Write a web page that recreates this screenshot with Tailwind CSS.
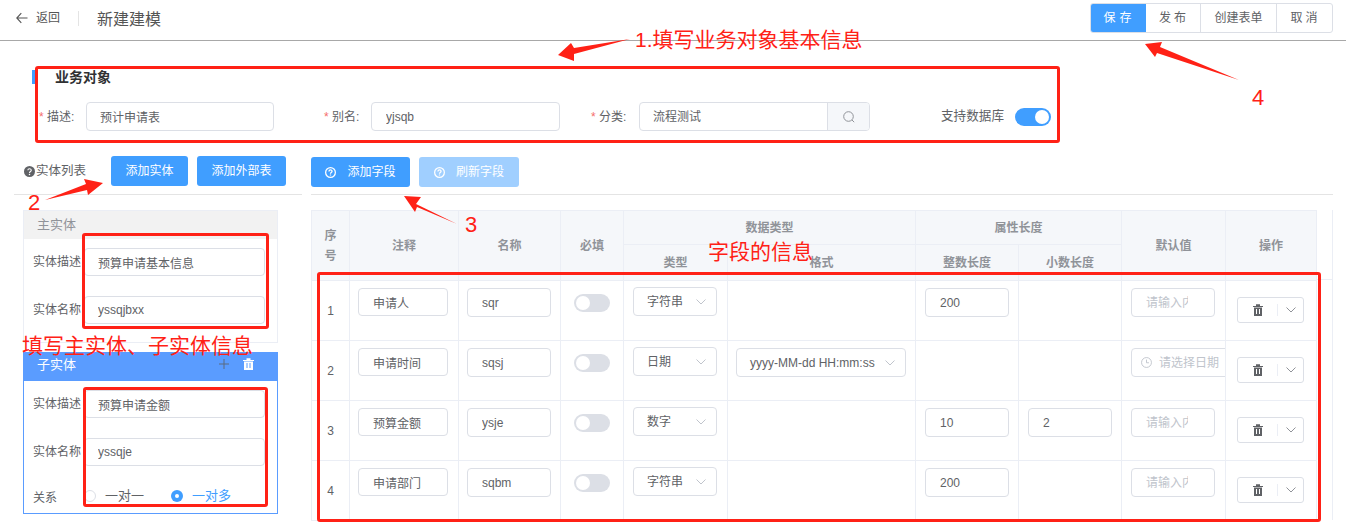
<!DOCTYPE html>
<html lang="en">
<head>
    <meta charset="UTF-8">
    <script src="https://cdn.jsdelivr.net/npm/@tailwindcss/browser@4"></script>
    <title>新建建模</title>
</head>
<body class="bg-white text-[#606266] text-xs font-[family-name:Liberation_Sans,Noto_Sans_CJK_SC,sans-serif]">
<div class="relative w-[1346px] h-[523px] overflow-hidden">

    <!-- Top bar -->
    <header class="h-[41px] border-b border-[#a8a8a8] flex items-start">
        <div class="flex items-center h-[36px] pl-[16px]">
            <svg class="w-[12px] h-[12px] mr-[8px]" viewBox="0 0 12 12" fill="none" stroke="#555" stroke-width="1.1"><path d="M11.5 6H.8M5.3 1.2.8 6l4.500 4.800"/></svg>
            <span class="text-[#555]">返回</span>
            <span class="w-px h-[15px] bg-[#e4e4e4] ml-[18px] mr-[18px]"></span>
            <span class="text-[16px] text-[#555] mt-[4px]">新建建模</span>
        </div>
        <div class="ml-auto mr-[13px] mt-[3px] flex h-[30px] rounded-[3px] border border-[#dcdfe6] overflow-hidden">
            <button class="w-[56px] -ml-px -my-px bg-[#409eff] text-white tracking-[4px] pl-[3px]">保存</button>
            <button class="w-[55px] border-r border-[#dcdfe6] tracking-[3px] pl-[2px]">发布</button>
            <button class="w-[76px] border-r border-[#dcdfe6]">创建表单</button>
            <button class="w-[55px] tracking-[3px] pl-[2px]">取消</button>
        </div>
    </header>

    <!-- Business object -->
    <section class="pl-[32px] pt-[29px]">
        <div class="h-[14px] border-l-[3px] border-[#409eff] pl-[20px] flex items-center font-bold text-[14px] text-[#303133] leading-none">业务对象</div>
        <div class="flex items-center h-[29px] mt-[18px] pl-[7px]">
            <label class="w-[37px] mr-[10px] whitespace-nowrap"><span class="text-[#f56c6c]">* </span>描述:</label>
            <input class="w-[188px] h-[29px] border border-[#dcdfe6] rounded-[4px] px-[13px] outline-none" value="预计申请表">
            <label class="w-[37px] ml-[50px] mr-[10px] whitespace-nowrap"><span class="text-[#f56c6c]">* </span>别名:</label>
            <input class="w-[189px] h-[29px] border border-[#dcdfe6] rounded-[4px] px-[14px] outline-none" value="yjsqb">
            <label class="w-[37px] ml-[31px] mr-[11px] whitespace-nowrap"><span class="text-[#f56c6c]">* </span>分类:</label>
            <div class="w-[231px] h-[29px] flex border border-[#dcdfe6] rounded-[4px] overflow-hidden">
                <input class="flex-1 min-w-0 px-[13px] outline-none" value="流程测试">
                <span class="w-[42px] bg-[#f5f7fa] border-l border-[#dcdfe6] flex items-center justify-center">
                    <svg class="w-[12px] h-[12px]" viewBox="0 0 12 12" fill="none" stroke="#909399" stroke-width="1"><circle cx="5.5" cy="5.5" r="4.8"/><path d="m9 9 2.2 2.2"/></svg>
                </span>
            </div>
            <span class="ml-[71px] w-[63px] whitespace-nowrap text-[12.6px]">支持数据库</span>
            <span class="ml-[11px] w-[36px] h-[18px] rounded-full bg-[#409eff] flex items-center justify-end pr-[2px]"><span class="w-[14px] h-[14px] rounded-full bg-white"></span></span>
        </div>
    </section>

    <div class="flex mt-[25px] pl-[14px]">
        <!-- Entities column -->
        <div class="w-[288px] shrink-0">
            <div class="h-[39px] border-b border-[#e4e4e4] flex items-start pl-[10px]">
                <div class="h-[30px] flex items-center whitespace-nowrap w-[87px] text-[12.5px]">
                    <svg class="w-[11px] h-[11px] mr-px shrink-0" viewBox="0 0 12 12"><circle cx="6" cy="6" r="6" fill="#606266"/><path d="M4.2 4.7c0-2.3 3.7-2.3 3.7-.1 0 1.4-1.9 1.400-1.900 2.900" fill="none" stroke="#fff" stroke-width="1.2"/><circle cx="6" cy="9.3" r=".8" fill="#fff"/></svg>
                    <span>实体列表</span>
                </div>
                <button class="w-[77px] h-[30px] rounded-[3px] bg-[#409eff] text-white">添加实体</button>
                <button class="w-[89px] h-[30px] rounded-[3px] bg-[#409eff] text-white ml-[9px]">添加外部表</button>
            </div>

            <!-- Main entity -->
            <div class="ml-[9px] w-[255px] h-[133px] mt-[15px] border border-[#ebeef5]">
                <div class="h-[28px] bg-[#f2f2f2] flex items-center pl-[13px] text-[13px] text-[#909399]">主实体</div>
                <div class="flex items-center mt-[9px] pl-[9px]">
                    <span class="w-[51px] whitespace-nowrap">实体描述</span>
                    <input class="w-[181px] h-[28px] border border-[#dcdfe6] rounded-[4px] px-[13px] outline-none" value="预算申请基本信息">
                </div>
                <div class="flex items-center mt-[20px] pl-[9px]">
                    <span class="w-[51px] whitespace-nowrap">实体名称</span>
                    <input class="w-[181px] h-[28px] border border-[#dcdfe6] rounded-[4px] px-[13px] outline-none" value="yssqjbxx">
                </div>
            </div>

            <!-- Child entity -->
            <div class="ml-[9px] w-[255px] h-[162px] mt-[9px] border border-[#5a9cff]">
                <div class="h-[28px] bg-[#5a9cff] flex items-start pt-[3px] pl-[13px] text-[13px] text-white">
                    <span>子实体</span>
                    <svg class="ml-auto mt-[3px] w-[10px] h-[10px]" viewBox="0 0 10 10" stroke="#5b6b80" stroke-width="1"><path d="M5 0v10M0 5h10"/></svg>
                    <svg class="ml-[14px] mt-[2px] mr-[23px] w-[11px] h-[12px]" viewBox="0 0 11 12" fill="#fff"><path d="M0 2h11v1H0zM3.5.3h4V2h-4zM1 3.6h9V12H1z"/><path d="M4 5v5M7 5v5" stroke="#5a9cff"/></svg>
                </div>
                <div class="flex items-center mt-[9px] pl-[9px]">
                    <span class="w-[51px] whitespace-nowrap">实体描述</span>
                    <input class="w-[181px] h-[28px] border border-[#dcdfe6] rounded-[4px] px-[13px] outline-none" value="预算申请金额">
                </div>
                <div class="flex items-center mt-[20px] pl-[9px]">
                    <span class="w-[51px] whitespace-nowrap">实体名称</span>
                    <input class="w-[181px] h-[28px] border border-[#dcdfe6] rounded-[4px] px-[13px] outline-none" value="yssqje">
                </div>
                <div class="flex items-center mt-[20px] pl-[9px]">
                    <span class="w-[51px] mt-[4px]">关系</span>
                    <span class="w-[12px] h-[12px] rounded-full border border-[#dcdfe6]"></span>
                    <span class="ml-[9px] text-[13px]">一对一</span>
                    <span class="ml-[27px] w-[12px] h-[12px] rounded-full bg-[#409eff] flex items-center justify-center"><span class="w-[4px] h-[4px] rounded-full bg-white"></span></span>
                    <span class="ml-[9px] text-[13px] text-[#409eff]">一对多</span>
                </div>
            </div>
        </div>

        <!-- Fields column -->
        <div class="ml-[9px] w-[1022px] shrink-0">
            <div class="h-[39px] border-b border-[#e4e4e4] flex items-start pt-px">
                <button class="w-[99px] h-[30px] rounded-[3px] bg-[#409eff] text-white flex items-center justify-center">
                    <svg class="w-[11px] h-[11px] mr-[11px]" viewBox="0 0 12 12" fill="none" stroke="#fff" stroke-width="1.4"><circle cx="6" cy="6" r="5.300"/><path d="M4.300 4.800c0-2.200 3.400-2.200 3.400-.1 0 1.300-1.700 1.300-1.700 2.600M6 8.200v1.100"/></svg>
                    添加字段
                </button>
                <button class="w-[100px] h-[30px] rounded-[3px] bg-[#a0cfff] text-white ml-[9px] flex items-center justify-center">
                    <svg class="w-[11px] h-[11px] mr-[11px]" viewBox="0 0 12 12" fill="none" stroke="#fff" stroke-width="1.4"><circle cx="6" cy="6" r="5.300"/><path d="M4.300 4.800c0-2.200 3.400-2.200 3.400-.1 0 1.300-1.700 1.300-1.700 2.600M6 8.200v1.100"/></svg>
                    刷新字段
                </button>
            </div>

            <div class="mt-[15px] relative">
                <table class="table-fixed border-collapse w-[1005px]">
                    <colgroup>
                        <col class="w-[38px]"><col class="w-[109px]"><col class="w-[102px]"><col class="w-[63px]"><col class="w-[104px]"><col class="w-[188px]"><col class="w-[103px]"><col class="w-[103px]"><col class="w-[104px]"><col class="w-[91px]">
                    </colgroup>
                    <thead class="bg-[#f5f7fa] text-[#909399] font-bold">
                        <tr class="h-[34px]">
                            <th rowspan="2" class="border border-[#ebeef5] leading-[20px]">序<br>号</th>
                            <th rowspan="2" class="border border-[#ebeef5]">注释</th>
                            <th rowspan="2" class="border border-[#ebeef5]">名称</th>
                            <th rowspan="2" class="border border-[#ebeef5]">必填</th>
                            <th colspan="2" class="border border-[#ebeef5]">数据类型</th>
                            <th colspan="2" class="border border-[#ebeef5]">属性长度</th>
                            <th rowspan="2" class="border border-[#ebeef5]">默认值</th>
                            <th rowspan="2" class="border border-[#ebeef5]">操作</th>
                        </tr>
                        <tr class="h-[36px]">
                            <th class="border border-[#ebeef5]">类型</th>
                            <th class="border border-[#ebeef5]">格式</th>
                            <th class="border border-[#ebeef5]">整数长度</th>
                            <th class="border border-[#ebeef5]">小数长度</th>
                        </tr>
                    </thead>
                    <tbody>
                        <tr class="h-[60px]">
                            <td class="border border-[#ebeef5] text-center">1</td>
                            <td class="border border-[#ebeef5] align-top pt-[7px] pl-[8px]"><input class="w-[90px] h-[28px] border border-[#dcdfe6] rounded-[4px] px-[14px] outline-none" value="申请人"></td>
                            <td class="border border-[#ebeef5] align-top pt-[7px] pl-[8px]"><input class="w-[84px] h-[29px] border border-[#dcdfe6] rounded-[4px] px-[14px] outline-none" value="sqr"></td>
                            <td class="border border-[#ebeef5] align-top pt-[13px] pl-[13px]"><span class="w-[36px] h-[18px] rounded-full bg-[#dcdfe6] flex items-center pl-[2px]"><span class="w-[14px] h-[14px] rounded-full bg-white"></span></span></td>
                            <td class="border border-[#ebeef5] align-top pt-[6px] pl-[9px]"><div class="w-[84px] h-[29px] border border-[#dcdfe6] rounded-[4px] pl-[13px] pr-[10px] flex items-center justify-between"><span>字符串</span><svg class="w-[10px] h-[6px]" viewBox="0 0 10 6" fill="none" stroke="#c0c4cc"><path d="m.5.5 4.500 4.500L9.500.5"/></svg></div></td>
                            <td class="border border-[#ebeef5]"></td>
                            <td class="border border-[#ebeef5] align-top pt-[7px] pl-[9px]"><input class="w-[84px] h-[29px] border border-[#dcdfe6] rounded-[4px] px-[14px] outline-none" value="200"></td>
                            <td class="border border-[#ebeef5]"></td>
                            <td class="border border-[#ebeef5] align-top pt-[7px] pl-[9px]"><input class="w-[84px] h-[29px] border border-[#dcdfe6] rounded-[4px] pl-[14px] pr-[26px] outline-none placeholder:text-[#c0c4cc]" placeholder="请输入内容"></td>
                            <td class="border border-[#ebeef5] align-top pt-[16px] pl-[11px]"><div class="w-[67px] h-[26px] border border-[#dcdfe6] rounded-[3px] flex items-center"><span class="w-[40px] flex justify-center border-r border-[#ebeef5]"><svg class="w-[10px] h-[12px]" viewBox="0 0 10 12" fill="#606266"><path d="M0 2h10v1H0zM3 .2h4V2H3zM1 3.600h8V12H1z"/><path d="M3.500 5v5M6.500 5v5" stroke="#fff"/></svg></span><svg class="ml-[8px] w-[10px] h-[6px]" viewBox="0 0 10 6" fill="none" stroke="#909399"><path d="m.5.5 4.500 4.500L9.500.5"/></svg></div></td>
                        </tr>
                        <tr class="h-[60px]">
                            <td class="border border-[#ebeef5] text-center">2</td>
                            <td class="border border-[#ebeef5] align-top pt-[7px] pl-[8px]"><input class="w-[90px] h-[28px] border border-[#dcdfe6] rounded-[4px] px-[14px] outline-none" value="申请时间"></td>
                            <td class="border border-[#ebeef5] align-top pt-[7px] pl-[8px]"><input class="w-[84px] h-[29px] border border-[#dcdfe6] rounded-[4px] px-[14px] outline-none" value="sqsj"></td>
                            <td class="border border-[#ebeef5] align-top pt-[13px] pl-[13px]"><span class="w-[36px] h-[18px] rounded-full bg-[#dcdfe6] flex items-center pl-[2px]"><span class="w-[14px] h-[14px] rounded-full bg-white"></span></span></td>
                            <td class="border border-[#ebeef5] align-top pt-[6px] pl-[9px]"><div class="w-[84px] h-[29px] border border-[#dcdfe6] rounded-[4px] pl-[13px] pr-[10px] flex items-center justify-between"><span>日期</span><svg class="w-[10px] h-[6px]" viewBox="0 0 10 6" fill="none" stroke="#c0c4cc"><path d="m.5.5 4.500 4.500L9.500.5"/></svg></div></td>
                            <td class="border border-[#ebeef5] align-top pt-[7px] pl-[8px]"><div class="w-[170px] h-[29px] border border-[#dcdfe6] rounded-[4px] pl-[13px] pr-[10px] flex items-center justify-between whitespace-nowrap"><span>yyyy-MM-dd HH:mm:ss</span><svg class="w-[10px] h-[6px]" viewBox="0 0 10 6" fill="none" stroke="#c0c4cc"><path d="m.5.5 4.500 4.500L9.500.5"/></svg></div></td>
                            <td class="border border-[#ebeef5]"></td>
                            <td class="border border-[#ebeef5]"></td>
                            <td class="border border-[#ebeef5] align-top pt-[7px] pl-[9px] overflow-hidden"><div class="w-[110px] h-[29px] border border-[#dcdfe6] rounded-[4px] pl-[9px] flex items-center text-[#c0c4cc] whitespace-nowrap"><svg class="w-[11px] h-[11px] mr-[7px] shrink-0" viewBox="0 0 12 12" fill="none" stroke="#c0c4cc"><circle cx="6" cy="6" r="5.400"/><path d="M6 2.800V6.300h2.700"/></svg>请选择日期</div></td>
                            <td class="border border-[#ebeef5] align-top pt-[16px] pl-[11px]"><div class="w-[67px] h-[26px] border border-[#dcdfe6] rounded-[3px] flex items-center"><span class="w-[40px] flex justify-center border-r border-[#ebeef5]"><svg class="w-[10px] h-[12px]" viewBox="0 0 10 12" fill="#606266"><path d="M0 2h10v1H0zM3 .2h4V2H3zM1 3.600h8V12H1z"/><path d="M3.500 5v5M6.500 5v5" stroke="#fff"/></svg></span><svg class="ml-[8px] w-[10px] h-[6px]" viewBox="0 0 10 6" fill="none" stroke="#909399"><path d="m.5.5 4.500 4.500L9.500.5"/></svg></div></td>
                        </tr>
                        <tr class="h-[60px]">
                            <td class="border border-[#ebeef5] text-center">3</td>
                            <td class="border border-[#ebeef5] align-top pt-[7px] pl-[8px]"><input class="w-[90px] h-[28px] border border-[#dcdfe6] rounded-[4px] px-[14px] outline-none" value="预算金额"></td>
                            <td class="border border-[#ebeef5] align-top pt-[7px] pl-[8px]"><input class="w-[84px] h-[29px] border border-[#dcdfe6] rounded-[4px] px-[14px] outline-none" value="ysje"></td>
                            <td class="border border-[#ebeef5] align-top pt-[13px] pl-[13px]"><span class="w-[36px] h-[18px] rounded-full bg-[#dcdfe6] flex items-center pl-[2px]"><span class="w-[14px] h-[14px] rounded-full bg-white"></span></span></td>
                            <td class="border border-[#ebeef5] align-top pt-[6px] pl-[9px]"><div class="w-[84px] h-[29px] border border-[#dcdfe6] rounded-[4px] pl-[13px] pr-[10px] flex items-center justify-between"><span>数字</span><svg class="w-[10px] h-[6px]" viewBox="0 0 10 6" fill="none" stroke="#c0c4cc"><path d="m.5.5 4.500 4.500L9.500.5"/></svg></div></td>
                            <td class="border border-[#ebeef5]"></td>
                            <td class="border border-[#ebeef5] align-top pt-[7px] pl-[9px]"><input class="w-[84px] h-[29px] border border-[#dcdfe6] rounded-[4px] px-[14px] outline-none" value="10"></td>
                            <td class="border border-[#ebeef5] align-top pt-[7px] pl-[9px]"><input class="w-[84px] h-[29px] border border-[#dcdfe6] rounded-[4px] px-[14px] outline-none" value="2"></td>
                            <td class="border border-[#ebeef5] align-top pt-[7px] pl-[9px]"><input class="w-[84px] h-[29px] border border-[#dcdfe6] rounded-[4px] pl-[14px] pr-[26px] outline-none placeholder:text-[#c0c4cc]" placeholder="请输入内容"></td>
                            <td class="border border-[#ebeef5] align-top pt-[16px] pl-[11px]"><div class="w-[67px] h-[26px] border border-[#dcdfe6] rounded-[3px] flex items-center"><span class="w-[40px] flex justify-center border-r border-[#ebeef5]"><svg class="w-[10px] h-[12px]" viewBox="0 0 10 12" fill="#606266"><path d="M0 2h10v1H0zM3 .2h4V2H3zM1 3.600h8V12H1z"/><path d="M3.500 5v5M6.500 5v5" stroke="#fff"/></svg></span><svg class="ml-[8px] w-[10px] h-[6px]" viewBox="0 0 10 6" fill="none" stroke="#909399"><path d="m.5.5 4.500 4.500L9.500.5"/></svg></div></td>
                        </tr>
                        <tr class="h-[60px]">
                            <td class="border border-[#ebeef5] text-center">4</td>
                            <td class="border border-[#ebeef5] align-top pt-[7px] pl-[8px]"><input class="w-[90px] h-[28px] border border-[#dcdfe6] rounded-[4px] px-[14px] outline-none" value="申请部门"></td>
                            <td class="border border-[#ebeef5] align-top pt-[7px] pl-[8px]"><input class="w-[84px] h-[29px] border border-[#dcdfe6] rounded-[4px] px-[14px] outline-none" value="sqbm"></td>
                            <td class="border border-[#ebeef5] align-top pt-[13px] pl-[13px]"><span class="w-[36px] h-[18px] rounded-full bg-[#dcdfe6] flex items-center pl-[2px]"><span class="w-[14px] h-[14px] rounded-full bg-white"></span></span></td>
                            <td class="border border-[#ebeef5] align-top pt-[6px] pl-[9px]"><div class="w-[84px] h-[29px] border border-[#dcdfe6] rounded-[4px] pl-[13px] pr-[10px] flex items-center justify-between"><span>字符串</span><svg class="w-[10px] h-[6px]" viewBox="0 0 10 6" fill="none" stroke="#c0c4cc"><path d="m.5.5 4.500 4.500L9.500.5"/></svg></div></td>
                            <td class="border border-[#ebeef5]"></td>
                            <td class="border border-[#ebeef5] align-top pt-[7px] pl-[9px]"><input class="w-[84px] h-[29px] border border-[#dcdfe6] rounded-[4px] px-[14px] outline-none" value="200"></td>
                            <td class="border border-[#ebeef5]"></td>
                            <td class="border border-[#ebeef5] align-top pt-[7px] pl-[9px]"><input class="w-[84px] h-[29px] border border-[#dcdfe6] rounded-[4px] pl-[14px] pr-[26px] outline-none placeholder:text-[#c0c4cc]" placeholder="请输入内容"></td>
                            <td class="border border-[#ebeef5] align-top pt-[16px] pl-[11px]"><div class="w-[67px] h-[26px] border border-[#dcdfe6] rounded-[3px] flex items-center"><span class="w-[40px] flex justify-center border-r border-[#ebeef5]"><svg class="w-[10px] h-[12px]" viewBox="0 0 10 12" fill="#606266"><path d="M0 2h10v1H0zM3 .2h4V2H3zM1 3.600h8V12H1z"/><path d="M3.500 5v5M6.500 5v5" stroke="#fff"/></svg></span><svg class="ml-[8px] w-[10px] h-[6px]" viewBox="0 0 10 6" fill="none" stroke="#909399"><path d="m.5.5 4.500 4.500L9.500.5"/></svg></div></td>
                        </tr>
                    </tbody>
                </table>
                <!-- Scrollbar gutter lines to the right of the table -->
                <span class="absolute left-[1005px] top-[69px] w-[17px] h-px bg-[#ebeef5]"></span>
                <span class="absolute left-[1021px] top-0 w-px h-[310px] bg-[#ebeef5]"></span>
            </div>
        </div>
    </div>

    <!-- Red annotations drawn over the screenshot -->
    <div class="absolute left-[35px] top-[66px] w-[1025px] h-[77px] border-[3px] border-[#ff2116] rounded-[3px]"></div>
    <div class="absolute left-[82px] top-[233px] w-[187px] h-[96px] border-[3px] border-[#ff2116] rounded-[3px]"></div>
    <div class="absolute left-[83px] top-[387px] w-[185px] h-[120px] border-[3px] border-[#ff2116] rounded-[3px]"></div>
    <div class="absolute left-[317px] top-[272px] w-[1004px] h-[250px] border-[3px] border-[#ff2116] rounded-[3px]"></div>

    <svg class="absolute left-0 top-0 w-[1346px] h-[523px]" viewBox="0 0 1346 523" fill="#ff2116">
        <polygon points="630,39 574,48 571,43 558,55 574,61 574,54"/>
        <polygon points="1239,80 1160,47 1162,42 1145,44 1155,57 1157,53"/>
        <polygon points="45,200 86,184 84,179 103,183 88,195 87,190"/>
        <polygon points="457,224 416,204 421,197 404,196 415,212 417,207"/>
    </svg>

    <span class="absolute left-[635px] top-[25px] text-[21px] leading-[30px] text-[#ff2116] whitespace-nowrap">1.填写业务对象基本信息</span>
    <span class="absolute left-[1252px] top-[83px] text-[22px] leading-[30px] text-[#ff2116]">4</span>
    <span class="absolute left-[28px] top-[188px] text-[22px] leading-[30px] text-[#ff2116]">2</span>
    <span class="absolute left-[465px] top-[210px] text-[22px] leading-[30px] text-[#ff2116]">3</span>
    <span class="absolute left-[708px] top-[237px] text-[21px] leading-[30px] text-[#ff2116] whitespace-nowrap">字段的信息</span>
    <span class="absolute left-[22px] top-[331px] text-[21px] leading-[30px] text-[#ff2116] whitespace-nowrap">填写主实体、子实体信息</span>
</div>
</body>
</html>
